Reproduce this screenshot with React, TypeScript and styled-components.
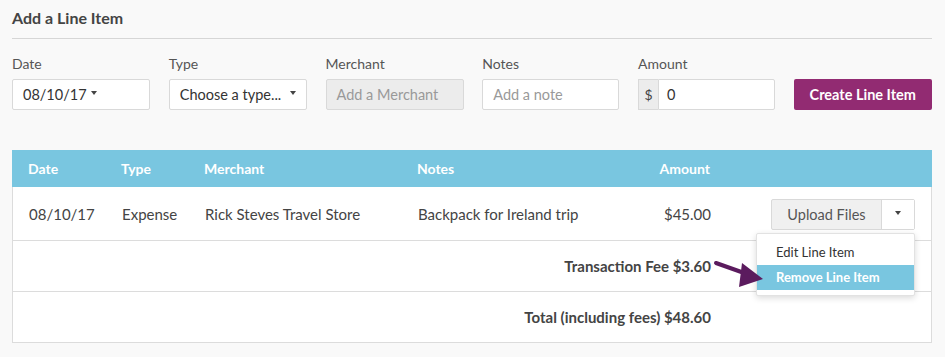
import React from "react";
import styled, { createGlobalStyle } from "styled-components";

const Global = createGlobalStyle`
  html, body { margin: 0; padding: 0; background: #f9f9f9; }
  body { font-family: Lato, "Open Sans", sans-serif; color: #444; }
  * { box-sizing: border-box; }
`;

const Page = styled.div`
  padding: 0 13px 0 12px;
  width: 945px;
  height: 357px;
  position: relative;
`;

const Title = styled.h2`
  margin: 0;
  padding-top: 8px;
  height: 39px;
  font-size: 16px;
  font-weight: 700;
  color: #444;
  line-height: 20px;
  border-bottom: 1px solid #d6d6d6;
`;

const Form = styled.div`
  display: grid;
  grid-template-columns: 138px 138px 138px 137px 137px 138px;
  column-gap: 18.75px;
  margin-top: 16px;
  align-items: end;
`;

const Field = styled.div`
  display: flex;
  flex-direction: column;
`;

const Label = styled.label`
  font-size: 14px;
  color: #555;
  line-height: 18px;
  margin-bottom: 6px;
`;

const Box = styled.div<{ $disabled?: boolean }>`
  height: 31px;
  border: 1px solid #d9d9d9;
  background: ${(p) => (p.$disabled ? "#ececec" : "#fff")};
  display: flex;
  align-items: center;
  padding: 0 10px;
  font-size: 14.5px;
  color: #333;
  border-radius: 2px;
`;

const Placeholder = styled.span`
  color: #999;
`;

const Caret = styled.span<{ $push?: boolean }>`
  display: inline-block;
  width: 0;
  height: 0;
  border-left: 3.5px solid transparent;
  border-right: 3.5px solid transparent;
  border-top: 4px solid #444;
  margin-left: ${(p) => (p.$push ? "auto" : "4px")};
  margin-top: -3px;
`;

const Group = styled.div`
  display: flex;
  height: 31px;
`;

const Addon = styled.span`
  width: 20px;
  background: #ececec;
  border: 1px solid #d9d9d9;
  border-right: none;
  display: flex;
  align-items: center;
  justify-content: center;
  font-size: 14px;
  color: #444;
`;

const GroupInput = styled(Box)`
  flex: 1;
  border-radius: 0 2px 2px 0;
  padding-left: 8px;
`;

const PrimaryButton = styled.button`
  height: 31px;
  background: #922b72;
  color: #fff;
  border: none;
  border-radius: 2px;
  font-family: inherit;
  font-size: 14.5px;
  font-weight: 700;
  padding: 0;
`;

const Table = styled.div`
  margin-top: 40px;
  border: 1px solid #dcdcdc;
  border-top: none;
  background: #fff;
  position: relative;
`;

const cols = "93px 83px 213px 199px 126px 1fr";

const HeadRow = styled.div`
  display: grid;
  grid-template-columns: ${cols};
  height: 37px;
  align-items: center;
  background: #79c6e0;
  margin: 0 -1px;
  color: #fff;
  font-size: 14px;
  font-weight: 700;
`;

const BodyRow = styled.div<{ $h: number }>`
  display: grid;
  grid-template-columns: ${cols};
  height: ${(p) => p.$h}px;
  align-items: center;
  font-size: 15px;
  color: #444;
  & + & { border-top: 1px solid #dcdcdc; }
`;

const Cell = styled.div<{ $right?: boolean; $span?: number; $bold?: boolean }>`
  padding: 0 16px;
  text-align: ${(p) => (p.$right ? "right" : "left")};
  ${(p) => (p.$span ? `grid-column: span ${p.$span};` : "")}
  font-weight: ${(p) => (p.$bold ? 700 : "inherit")};
  white-space: nowrap;
`;

const ActionCell = styled.div`
  display: flex;
  justify-content: flex-end;
  padding-right: 16px;
  position: relative;
`;

const SplitButton = styled.div`
  display: flex;
  height: 31px;
  border: 1px solid #d9d9d9;
  border-radius: 2px;
  background: #f0f0f0;
  margin-top: 1px;
`;

const SplitMain = styled.span`
  width: 110px;
  display: flex;
  align-items: center;
  justify-content: center;
  color: #555;
  font-size: 14.5px;
  border-right: 1px solid #d9d9d9;
`;

const SplitToggle = styled.span`
  width: 32px;
  display: flex;
  align-items: center;
  justify-content: center;
  background: #fff;
`;

const Menu = styled.ul`
  position: absolute;
  right: 16px;
  top: 35px;
  width: 159px;
  margin: 0;
  padding: 6px 0 5px;
  list-style: none;
  background: #fff;
  border: 1px solid #e2e2e2;
  border-radius: 2px;
  box-shadow: 0 2px 6px rgba(0, 0, 0, 0.15);
  z-index: 2;
`;

const MenuItem = styled.li<{ $active?: boolean }>`
  height: 25px;
  line-height: 25px;
  padding: 0 19px;
  font-size: 13px;
  color: ${(p) => (p.$active ? "#fff" : "#333")};
  background: ${(p) => (p.$active ? "#79c6e0" : "transparent")};
  font-weight: ${(p) => (p.$active ? 700 : 400)};
`;

const Arrow = styled.svg`
  position: absolute;
  left: 690px;
  top: 110px;
  z-index: 3;
`;

export default function App() {
  return (
    <>
      <Global />
      <Page>
        <Title>Add a Line Item</Title>
        <Form>
          <Field>
            <Label>Date</Label>
            <Box>
              08/10/17
              <Caret />
            </Box>
          </Field>
          <Field>
            <Label>Type</Label>
            <Box>
              Choose a type...
              <Caret $push />
            </Box>
          </Field>
          <Field>
            <Label>Merchant</Label>
            <Box $disabled>
              <Placeholder>Add a Merchant</Placeholder>
            </Box>
          </Field>
          <Field>
            <Label>Notes</Label>
            <Box>
              <Placeholder>Add a note</Placeholder>
            </Box>
          </Field>
          <Field>
            <Label>Amount</Label>
            <Group>
              <Addon>$</Addon>
              <GroupInput>0</GroupInput>
            </Group>
          </Field>
          <PrimaryButton>Create Line Item</PrimaryButton>
        </Form>
        <Table>
          <HeadRow>
            <Cell>Date</Cell>
            <Cell>Type</Cell>
            <Cell>Merchant</Cell>
            <Cell>Notes</Cell>
            <Cell $right>Amount</Cell>
            <Cell />
          </HeadRow>
          <BodyRow $h={53}>
            <Cell>08/10/17</Cell>
            <Cell>Expense</Cell>
            <Cell>Rick Steves Travel Store</Cell>
            <Cell>Backpack for Ireland trip</Cell>
            <Cell $right>$45.00</Cell>
            <ActionCell>
              <SplitButton>
                <SplitMain>Upload Files</SplitMain>
                <SplitToggle>
                  <Caret style={{ marginLeft: 0 }} />
                </SplitToggle>
              </SplitButton>
              <Menu>
                <MenuItem>Edit Line Item</MenuItem>
                <MenuItem $active>Remove Line Item</MenuItem>
              </Menu>
            </ActionCell>
          </BodyRow>
          <BodyRow $h={51}>
            <Cell $right $span={5} $bold>
              Transaction Fee $3.60
            </Cell>
            <Cell />
          </BodyRow>
          <BodyRow $h={51}>
            <Cell $right $span={5} $bold>
              Total (including fees) $48.60
            </Cell>
            <Cell />
          </BodyRow>
          <Arrow width="70" height="40" viewBox="0 0 70 40">
            <path
              d="M13 3 L44 14"
              stroke="#5b1b5e"
              strokeWidth="4"
              strokeLinecap="round"
              fill="none"
            />
            <polygon points="39,3 60,19 36,27" fill="#5b1b5e" />
          </Arrow>
        </Table>
      </Page>
    </>
  );
}
